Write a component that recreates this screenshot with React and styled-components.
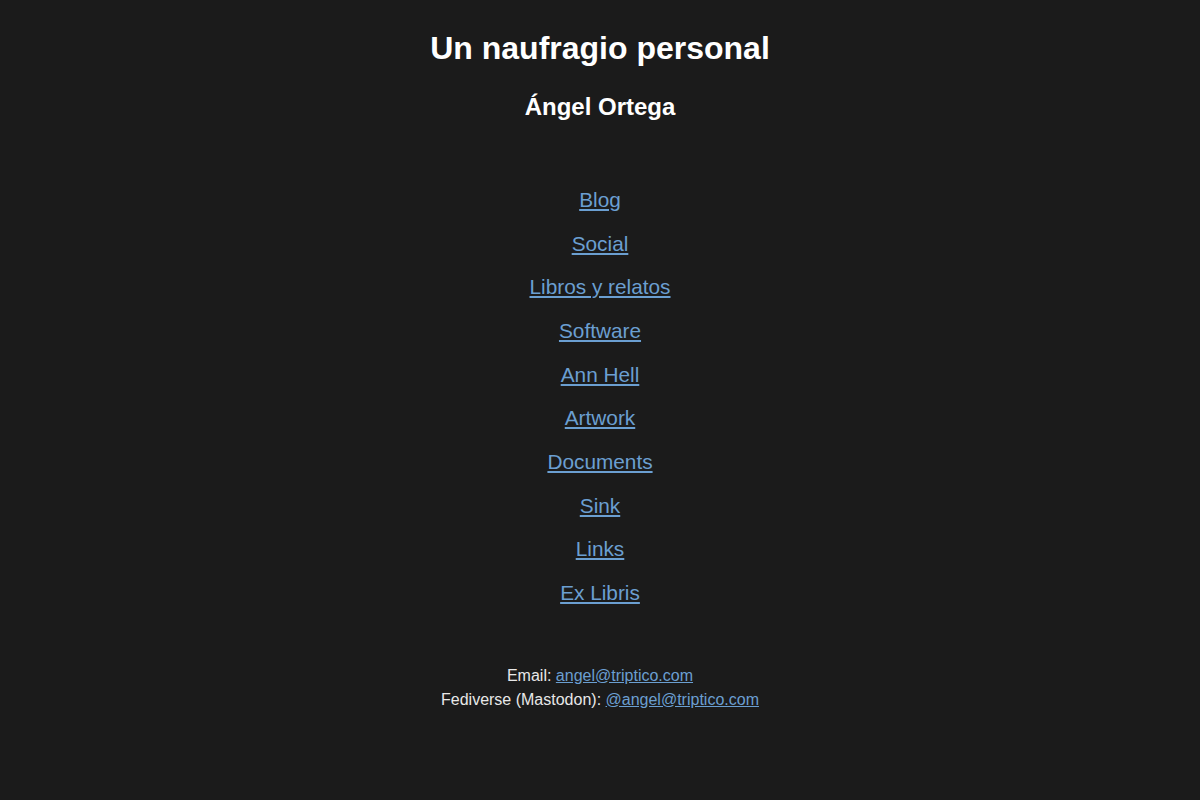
import React from "react";
import styled, { createGlobalStyle } from "styled-components";

const Global = createGlobalStyle`
  html, body { margin: 0; padding: 0; background: #1b1b1b; }
  body { font-family: "Liberation Sans", Arial, sans-serif; color: #ffffff; }
`;

const Page = styled.div`
  display: flex;
  flex-direction: column;
  align-items: center;
  padding-top: 29.5px;
  min-height: 800px;
  box-sizing: border-box;
  text-align: center;
`;

const Title = styled.h1`
  margin: 0;
  font-size: 32px;
  line-height: 37px;
  font-weight: bold;
  color: #ffffff;
`;

const Author = styled.h2`
  margin: 26.5px 0 0;
  font-size: 24px;
  line-height: 28px;
  font-weight: bold;
  color: #ffffff;
`;

const Nav = styled.ul`
  list-style: none;
  margin: 67px 0 0;
  padding: 0;
  display: flex;
  flex-direction: column;
  align-items: center;
  gap: 19.67px;
`;

const NavItem = styled.li`
  font-size: 20.8px;
  line-height: 24px;
`;

const Link = styled.a`
  color: #6b9fd1;
  text-decoration: underline;
`;

const Footer = styled.div`
  margin-top: 58.6px;
  font-size: 16px;
  line-height: 24px;
  color: #e8e8e8;
`;

const links = [
  "Blog",
  "Social",
  "Libros y relatos",
  "Software",
  "Ann Hell",
  "Artwork",
  "Documents",
  "Sink",
  "Links",
  "Ex Libris",
];

export default function App() {
  return (
    <>
      <Global />
      <Page>
        <Title>Un naufragio personal</Title>
        <Author>Ángel Ortega</Author>
        <Nav>
          {links.map((l) => (
            <NavItem key={l}>
              <Link href="#">{l}</Link>
            </NavItem>
          ))}
        </Nav>
        <Footer>
          <div>
            Email: <Link href="#">angel@triptico.com</Link>
          </div>
          <div>
            Fediverse (Mastodon): <Link href="#">@angel@triptico.com</Link>
          </div>
        </Footer>
      </Page>
    </>
  );
}
